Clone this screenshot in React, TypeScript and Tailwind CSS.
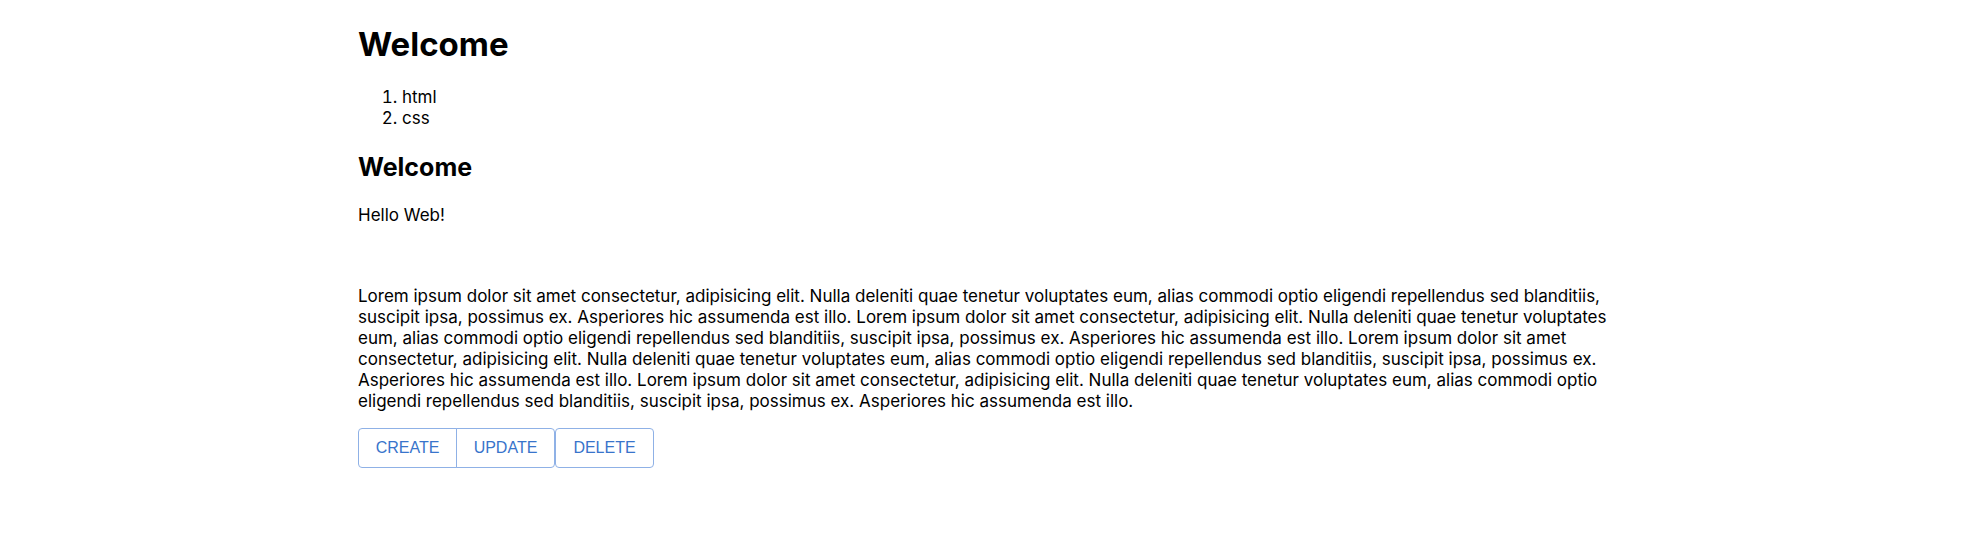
const lorem = "Lorem ipsum dolor sit amet consectetur, adipisicing elit. Nulla deleniti quae tenetur voluptates eum, alias commodi optio eligendi repellendus sed blanditiis, suscipit ipsa, possimus ex. Asperiores hic assumenda est illo.";

const buttonClass = "h-10 min-w-[99px] border border-[#8fb1e6] px-4 font-['Liberation_Sans',sans-serif] text-base text-[#3874cb] hover:bg-[#3874cb]/5";

export default function App() {
  return (
    <div className="pr-[15px]">
      <main className="mx-auto max-w-[1300px] px-6 pt-5 font-['Inter',sans-serif] text-[17px] leading-[21px] text-black">
        <h1 className="text-[33px] leading-[48px] font-bold">Welcome</h1>
        <ol className="mt-[19px] list-decimal pl-11">
          <li>html</li>
          <li>css</li>
        </ol>
        <h2 className="mt-[22px] text-[25px] leading-8 font-bold">Welcome</h2>
        <p className="mt-[22px]">Hello Web!</p>
        <p className="mt-15">{[lorem, lorem, lorem, lorem].join(" ")}</p>
        <div className="mt-4 flex">
          <div className="flex">
            <button type="button" className={`${buttonClass} rounded-l`}>CREATE</button>
            <button type="button" className={`${buttonClass} -ml-px rounded-r`}>UPDATE</button>
          </div>
          <button type="button" className={`${buttonClass} rounded`}>DELETE</button>
        </div>
      </main>
    </div>
  );
}
